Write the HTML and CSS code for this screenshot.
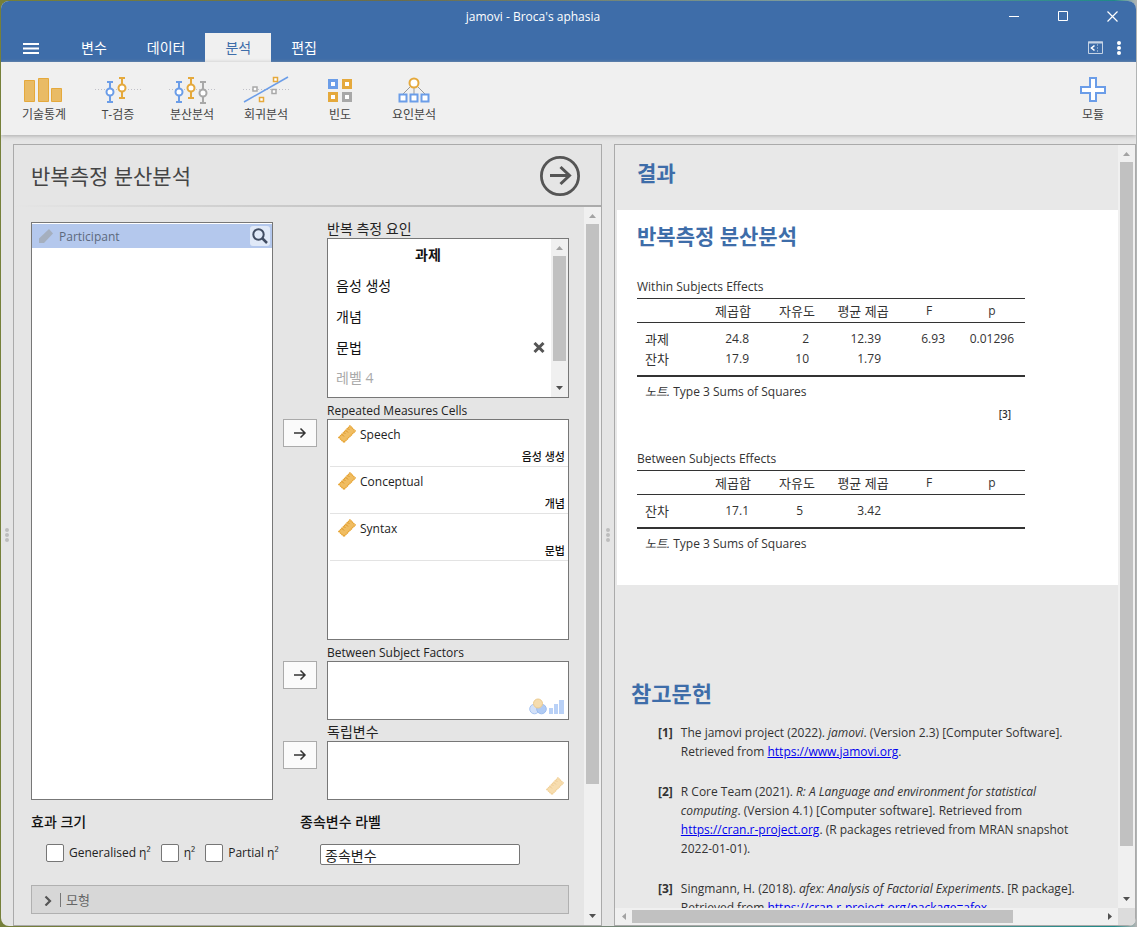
FILE: index.html
```html
<!DOCTYPE html>
<html lang="ko">
<head>
<meta charset="utf-8">
<title>jamovi - Broca's aphasia</title>
<link rel="stylesheet" href="styles.css">
</head>
<body>
<svg class="defs" aria-hidden="true">
  <symbol id="ruler" viewBox="0 0 18 18">
    <path d="M.8 12.500 12 .8 17.300 6 6 17.400Z" fill="#f0bd62" stroke="#e6a22f" stroke-width="1.300" stroke-dasharray="1.400 .5"/>
    <path d="M4 9.500l2 2M6 7.500l1.400 1.400M8 5.500l2 2M10 3.500l1.400 1.400" stroke="#d9952a" stroke-width="1"/>
  </symbol>
  <symbol id="arrow" viewBox="0 0 14 12">
    <path d="M1 6H12M7.500 1.500 12 6 7.500 10.500" fill="none" stroke="#333" stroke-width="1.500"/>
  </symbol>
  <symbol id="up" viewBox="0 0 7 4"><path d="M0 4 3.500 0 7 4Z" fill="#a3a3a3"/></symbol>
  <symbol id="down" viewBox="0 0 7 4"><path d="M0 0H7L3.500 4Z" fill="#505050"/></symbol>
</svg>
<div class="window">
  <header class="titlebar">
    <h1 class="window-title">jamovi - Broca's aphasia</h1>
    <div class="window-controls">
      <button class="window-button" aria-label="최소화"><svg width="11" height="11"><path d="M0 5.500H10" stroke="#fff"/></svg></button>
      <button class="window-button" aria-label="최대화"><svg width="11" height="11"><path d="M.5.5H9.500V9.500H.5Z" fill="none" stroke="#fff"/></svg></button>
      <button class="window-button" aria-label="닫기"><svg width="11" height="11"><path d="M.5.5 10.500 10.500M10.500.5.5 10.500" stroke="#fff" stroke-width="1.2"/></svg></button>
    </div>
  </header>
  <nav class="tabs">
    <button class="menu-button" aria-label="메뉴"><svg width="16" height="11"><path d="M0 1H16M0 5.500H16M0 10H16" stroke="#fff" stroke-width="2"/></svg></button>
    <button class="tab">변수</button>
    <button class="tab">데이터</button>
    <button class="tab tab-active">분석</button>
    <button class="tab">편집</button>
    <div class="tab-tools">
      <button class="plain" aria-label="패널 보기"><svg width="15" height="13" fill="none"><path d="M.5 1H14.500V12.500H.5Z" stroke="#c5d3e5"/><path d="M0 1.500H15" stroke="#c5d3e5" stroke-width="2"/><path d="M6.500 4.500 3.500 7 6.500 9.500" stroke="#fff" stroke-width="1.600"/><path d="M9.500 3V12" stroke="#8ba8cc" stroke-dasharray="2 1"/></svg></button>
      <button class="plain" aria-label="더보기"><svg width="4" height="14" fill="#fff"><circle cx="2" cy="2" r="2"/><circle cx="2" cy="7" r="2"/><circle cx="2" cy="12" r="2"/></svg></button>
    </div>
  </nav>
  <div class="ribbon">
    <button class="ribbon-button">
      <svg width="46" height="30" fill="#e9bb65" stroke="#e5a93c"><path d="M3.500 5.500H13.500V26.500H3.500ZM17.500 3.500H27.500V26.500H17.500ZM30.500 13.500H40.500V26.500H30.500Z"/></svg>
      <span>기술통계</span></button>
    <button class="ribbon-button">
      <svg width="46" height="30" fill="none"><path d="M0 14.500H46" stroke="#c0c0c8" stroke-dasharray="1 2"/><g stroke="#6b9de8" stroke-width="2"><path d="M12 7H18M12 27H18M15 7V27"/><circle cx="15" cy="17" r="3.500" fill="#fff"/></g><g stroke="#e5a93c" stroke-width="2"><path d="M24 3H30M24 23H30M27 3V23"/><circle cx="27" cy="13" r="3.500" fill="#fff"/></g></svg>
      <span>T-검증</span></button>
    <button class="ribbon-button">
      <svg width="46" height="30" fill="none"><path d="M0 14.500H46" stroke="#c0c0c8" stroke-dasharray="1 2"/><g stroke="#6b9de8" stroke-width="2"><path d="M7 7H13M7 27H13M10 7V27"/><circle cx="10" cy="17" r="3.500" fill="#fff"/></g><g stroke="#e5a93c" stroke-width="2"><path d="M19 3H25M19 23H25M22 3V23"/><circle cx="22" cy="13" r="3.500" fill="#fff"/></g><g stroke="#a8a8a8" stroke-width="2"><path d="M31 7H37M31 28H37M34 7V28"/><circle cx="34" cy="18" r="3.500" fill="#fff"/></g></svg>
      <span>분산분석</span></button>
    <button class="ribbon-button">
      <svg width="46" height="30" fill="none"><path d="M0 14.500H46" stroke="#c0c0c8" stroke-dasharray="1 2"/><path d="M1 27 45 2" stroke="#6b9de8" stroke-width="1.500"/><g fill="#fff" stroke-width="1.500"><path d="M10 12H14V16H10ZM29 14.500H33V18.500H29Z" stroke="#a8a8a8"/><path d="M30.500 2.500H34.500V6.500H30.500ZM16.500 22.500H20.500V26.500H16.500Z" stroke="#e5a93c"/></g></svg>
      <span>회귀분석</span></button>
    <button class="ribbon-button">
      <svg width="46" height="30" fill="#fff" stroke-width="3"><path d="M12.500 5.500H19.500V12.500H12.500Z" stroke="#6b9de8"/><path d="M26.500 5.500H33.500V12.500H26.500ZM12.500 18.500H19.500V25.500H12.500Z" stroke="#e5a93c"/><path d="M26.500 18.500H33.500V25.500H26.500Z" stroke="#a8a8a8"/></svg>
      <span>빈도</span></button>
    <button class="ribbon-button">
      <svg width="46" height="30" fill="#fff"><path d="M23 10V20M20 11 11 20M26 11 35 20" stroke="#999"/><circle cx="23" cy="8" r="4.500" stroke="#e5a93c" stroke-width="2"/><path d="M8.500 19.500H15.500V26.500H8.500ZM19.500 19.500H26.500V26.500H19.500ZM30.500 19.500H37.500V26.500H30.500Z" stroke="#6b9de8" stroke-width="2"/></svg>
      <span>요인분석</span></button>
    <button class="ribbon-button ribbon-modules">
      <svg width="46" height="30"><path d="M20 3H26V12H35V18H26V26H20V18H11V12H20Z" fill="#fff" stroke="#6b9de8" stroke-width="2"/></svg>
      <span>모듈</span></button>
  </div>
  <main class="workspace">
    <div class="splitter"><svg width="4" height="16" fill="#bdbdbd"><circle cx="2" cy="3" r="2"/><circle cx="2" cy="8" r="2"/><circle cx="2" cy="13" r="2"/></svg></div>
    <section class="options">
      <div class="options-header">
        <h2 class="options-title">반복측정 분산분석</h2>
        <button class="plain" aria-label="옵션 닫기"><svg class="block" width="40" height="40" fill="none" stroke="#555" stroke-width="2.800"><circle cx="20" cy="20" r="18.600"/><path d="M10 19.500H29M20.500 11 29.500 19.500 20.500 28" stroke-width="3"/></svg></button>
      </div>
      <div class="options-main">
        <div class="options-body">
          <div class="assign">
            <div class="supplier">
              <div class="supplier-row">
                <svg width="16" height="16"><path d="M1 10.500 11 1 15 5.500 6 15H1Z" fill="#a5afbe"/></svg>
                <span class="supplier-name">Participant</span>
                <button class="search" aria-label="검색"><svg class="block" width="16" height="16" fill="none" stroke="#414d63"><circle cx="6.500" cy="6.500" r="5.200" stroke-width="2"/><path d="M10.500 10.500 15 15" stroke-width="2.500"/></svg></button>
              </div>
            </div>
            <div class="target">
              <h3 class="label korean">반복 측정 요인</h3>
              <div class="box factor-box">
                <div class="factor-list">
                  <input class="level factor-name" aria-label="요인 이름" value="과제">
                  <input class="level" aria-label="레벨 1" value="음성 생성">
                  <input class="level" aria-label="레벨 2" value="개념">
                  <div class="level-row"><input class="level" aria-label="레벨 3" value="문법"><button class="plain remove" aria-label="레벨 삭제"><svg class="block" width="12" height="12"><path d="M1.500 1 10.500 10M10.500 1 1.500 10" stroke="#555" stroke-width="3"/></svg></button></div>
                  <input class="level" aria-label="레벨 4" placeholder="레벨 4">
                </div>
                <div class="scrollbar"><svg width="7" height="4"><use href="#up"/></svg><div class="track"><div class="thumb thumb-levels"></div></div><svg width="7" height="4"><use href="#down"/></svg></div>
              </div>
            </div>
            <button class="move" aria-label="셀로 이동"><svg width="14" height="12"><use href="#arrow"/></svg></button>
            <div class="target">
              <h3 class="label">Repeated Measures Cells</h3>
              <div class="box cells-box">
                <div class="cell"><div class="cell-name"><svg width="18" height="18"><use href="#ruler"/></svg><span>Speech</span></div><div class="cell-level">음성 생성</div></div>
                <div class="cell"><div class="cell-name"><svg width="18" height="18"><use href="#ruler"/></svg><span>Conceptual</span></div><div class="cell-level">개념</div></div>
                <div class="cell"><div class="cell-name"><svg width="18" height="18"><use href="#ruler"/></svg><span>Syntax</span></div><div class="cell-level">문법</div></div>
              </div>
            </div>
            <button class="move" aria-label="집단 요인으로 이동"><svg width="14" height="12"><use href="#arrow"/></svg></button>
            <div class="target">
              <h3 class="label">Between Subject Factors</h3>
              <div class="box drop-box">
                <svg width="18" height="17"><circle cx="5.500" cy="11" r="4.800" fill="#d3e1f8" stroke="#a9c5f2"/><circle cx="12.500" cy="11" r="4.800" fill="#b0cbf4" stroke="#9dbdf0"/><circle cx="9" cy="5.500" r="4.500" fill="#f5dcae" stroke="#eccb8f"/></svg>
                <svg width="15" height="17" fill="#b9d1f7"><path d="M0 10H4V16H0ZM5 6H9V16H5ZM10 2H15V16H10Z"/></svg>
              </div>
            </div>
            <button class="move" aria-label="독립변수로 이동"><svg width="14" height="12"><use href="#arrow"/></svg></button>
            <div class="target">
              <h3 class="label korean">독립변수</h3>
              <div class="box drop-box"><svg class="faded" width="18" height="18"><use href="#ruler"/></svg></div>
            </div>
          </div>
          <div class="settings">
            <fieldset class="setting">
              <legend class="setting-title">효과 크기</legend>
              <div class="checks">
                <label class="check"><input type="checkbox">Generalised η²</label>
                <label class="check"><input type="checkbox">η²</label>
                <label class="check"><input type="checkbox">Partial η²</label>
              </div>
            </fieldset>
            <div class="setting">
              <label class="setting-title" for="dv">종속변수 라벨</label>
              <div class="field"><input class="text-input" id="dv" value="종속변수"></div>
            </div>
          </div>
          <button class="collapse"><svg width="8" height="12"><path d="M1.500 2.500 6 7 1.500 11.500" fill="none" stroke="#555" stroke-width="2.200"/></svg><span class="collapse-title">모형</span></button>
        </div>
        <div class="scrollbar"><svg width="7" height="4"><use href="#up"/></svg><div class="track"><div class="thumb thumb-options"></div></div><svg width="7" height="4"><use href="#down"/></svg></div>
      </div>
    </section>
    <div class="splitter"><svg width="4" height="16" fill="#bdbdbd"><circle cx="2" cy="3" r="2"/><circle cx="2" cy="8" r="2"/><circle cx="2" cy="13" r="2"/></svg></div>
    <section class="results">
      <div class="results-body">
        <h2 class="results-title">결과</h2>
        <article class="analysis">
          <h2 class="heading">반복측정 분산분석</h2>
          <table class="stats">
            <caption>Within Subjects Effects</caption>
            <colgroup><col class="c-name"><col class="c-ss"><col class="c-df"><col class="c-ms"><col class="c-f"><col class="c-p"></colgroup>
            <thead><tr><th></th><th>제곱합</th><th>자유도</th><th>평균 제곱</th><th class="latin">F</th><th class="latin">p</th></tr></thead>
            <tbody>
              <tr><th scope="row">과제</th><td>24.8</td><td>2</td><td>12.39</td><td>6.93</td><td>0.01296</td></tr>
              <tr><th scope="row">잔차</th><td>17.9</td><td>10</td><td>1.79</td><td></td><td></td></tr>
            </tbody>
          </table>
          <p class="note"><i>노트.</i> Type 3 Sums of Squares</p>
          <p class="cite">[3]</p>
          <table class="stats">
            <caption>Between Subjects Effects</caption>
            <colgroup><col class="c-name"><col class="c-ss"><col class="c-df"><col class="c-ms"><col class="c-f"><col class="c-p"></colgroup>
            <thead><tr><th></th><th>제곱합</th><th>자유도</th><th>평균 제곱</th><th class="latin">F</th><th class="latin">p</th></tr></thead>
            <tbody>
              <tr><th scope="row">잔차</th><td>17.1</td><td class="narrow">5</td><td>3.42</td><td></td><td></td></tr>
            </tbody>
          </table>
          <p class="note"><i>노트.</i> Type 3 Sums of Squares</p>
        </article>
        <section class="references">
          <h2 class="heading">참고문헌</h2>
          <div class="reference"><b>[1]</b><p>The jamovi project (2022). <i>jamovi</i>. (Version 2.3) [Computer Software].<br>Retrieved from <a href="https://www.jamovi.org">https://www.jamovi.org</a>.</p></div>
          <div class="reference"><b>[2]</b><p>R Core Team (2021). <i>R: A Language and environment for statistical<br>computing</i>. (Version 4.1) [Computer software]. Retrieved from<br><a href="https://cran.r-project.org">https://cran.r-project.org</a>. (R packages retrieved from MRAN snapshot<br>2022-01-01).</p></div>
          <div class="reference"><b>[3]</b><p>Singmann, H. (2018). <i>afex: Analysis of Factorial Experiments</i>. [R package].<br>Retrieved from <a href="https://cran.r-project.org/package=afex">https://cran.r-project.org/package=afex</a>.</p></div>
        </section>
      </div>
      <div class="scrollbar"><svg width="7" height="4"><use href="#up"/></svg><div class="track"><div class="thumb thumb-results"></div></div><svg width="7" height="4"><use href="#down"/></svg></div>
      <div class="scrollbar-x"><svg width="4" height="7"><path d="M4 0V7L0 3.500Z" fill="#a3a3a3"/></svg><div class="track"><div class="thumb thumb-x"></div></div><svg width="4" height="7"><path d="M0 0V7L4 3.500Z" fill="#505050"/></svg></div>
      <div class="corner"></div>
    </section>
  </main>
</div>
</body>
</html>
```

FILE: styles.css
```css
* { box-sizing: border-box; }

body {
  margin: 0;
  height: 100vh;
  padding: 1px;
  overflow: hidden;
  background: linear-gradient(90deg, #76803a, #6b6d4c 35%, #7d9c9c 70%, #1f8a88 98%, #b5b5b5);
  font: 12px/16px "Open Sans", "Noto Sans CJK KR", sans-serif;
  color: #222;
}

h1, h2, h3, p { margin: 0; font-weight: 400; }
button, input { font: inherit; color: inherit; }
button { padding: 0; border: 0; background: none; }
.defs { position: absolute; width: 0; height: 0; }
.block { display: block; }
.plain { display: grid; place-items: center; }

.window {
  display: flex;
  flex-direction: column;
  height: 100%;
  overflow: hidden;
  border-radius: 8px;
  background: #e5e5e5;
}

/* Title bar and tabs */
.titlebar { display: flex; height: 32px; padding-left: 76px; background: #3e6da9; color: #fff; }
.window-title { flex: 1; text-align: center; font-size: 12px; line-height: 32px; }
.window-controls { display: flex; }
.window-button { display: grid; place-items: center; width: 49px; padding: 0 0 2px 2px; }
.tabs { display: flex; height: 29px; background: #3e6da9; color: #fff; font-size: 14px; }
.menu-button { display: grid; place-items: center; width: 60px; padding-top: 2px; }
.tab { padding: 0 20px; line-height: 28px; }
.tab-active { background: #f0f0f0; color: #3e6da9; }
.tab-tools { display: flex; gap: 14px; margin-left: auto; padding-right: 15px; }

/* Ribbon */
.ribbon {
  z-index: 1;
  display: flex;
  height: 73px;
  padding: 13px 6px 0;
  background: #f0f0f0;
  box-shadow: 0 1px 4px #aaa;
}
.ribbon-button { display: flex; flex-direction: column; align-items: center; width: 74px; color: #444; }
.ribbon-button span { line-height: 20px; }
.ribbon-modules { margin-left: auto; }

/* Workspace */
.workspace {
  display: grid;
  grid-template: minmax(0, 1fr) / 12px 589fr 12px 522fr;
  flex: 1;
  min-height: 0;
  padding-top: 9px;
}
.splitter { display: grid; place-items: center; }

.scrollbar { display: flex; flex-direction: column; align-items: center; width: 17px; padding: 7px 0 7px; background: #f0f0f0; }
.scrollbar svg, .scrollbar-x svg { flex: none; }
.scrollbar .track { flex: 1; width: 13px; margin: 6px 0 7px; }
.thumb { background: #c1c1c1; }
.thumb-levels { height: 85%; }
.thumb-options { height: 82%; }
.thumb-results { height: 94%; }
.thumb-x { width: 81%; height: 100%; }

/* Options panel */
.options { display: flex; flex-direction: column; min-width: 0; border: 1px solid #aaa; }
.options-header {
  display: flex;
  align-items: center;
  justify-content: space-between;
  height: 62px;
  padding: 2px 21px 0 17px;
  border-bottom: 2px solid;
  border-image: linear-gradient(90deg, #e5e5e5, #aaa) 1;
}
.options-title { font-size: 21px; line-height: 28px; color: #444; }
.options-main { display: flex; flex: 1; min-height: 0; }
.options-body { flex: 1; padding: 15px 15px 0 17px; overflow: hidden; }
.assign {
  display: grid;
  grid-template-columns: 1fr 34px 1fr;
  gap: 5px 10px;
}
.supplier { grid-row: 1 / 5; padding-top: 1px; border: 1px solid #777; background: #fff; }
.supplier-row { display: flex; align-items: center; gap: 5px; height: 24px; padding: 0 2px 0 6px; background: #b4c8ed; color: #5d687c; }
.supplier-name { padding-top: 2px; }
.search { display: grid; place-items: center; width: 20px; height: 20px; margin-left: auto; border-radius: 3px; background: #e0e9f8; }
.target { grid-column: 3; }
.label { height: 16px; font-size: 12px; line-height: 16px; }
.korean { font-size: 14px; line-height: 14px; }
.box { border: 1px solid #777; background: #fff; }
.move { grid-column: 2; height: 28px; margin-top: 16px; padding-bottom: 2px; border: 1px solid #aaa; background: #fafafa; }
.move svg { vertical-align: middle; }

.factor-box { display: flex; height: 160px; }
.factor-list { flex: 1; min-width: 0; }
.level { display: block; width: 100%; height: 31px; padding: 0 8px 2px; border: 0; outline: 0; background: none; font-size: 14px; color: #111; }
.level::placeholder { color: #aaa; opacity: 1; }
.factor-name { padding-right: 31px; text-align: center; font-weight: 600; }
.level-row { display: flex; align-items: center; padding-right: 6px; }
.remove { width: 12px; height: 12px; }

.cells-box { height: 221px; }
.cell { height: 47px; margin-left: 2px; border-bottom: 1px solid #e3e3e3; }
.cell-name { display: flex; align-items: center; gap: 4px; height: 28px; padding-left: 8px; }
.cell-name span { padding-top: 2px; }
.cell-level { padding-right: 3px; text-align: right; font-size: 11px; font-weight: 500; line-height: 18px; color: #111; }
.drop-box { display: flex; align-items: flex-end; justify-content: flex-end; gap: 2px; height: 59px; padding: 3px 4px 4px; }
.faded { opacity: .5; }

.settings { display: grid; grid-template-columns: 1fr 1fr; padding-top: 12px; }
.setting { min-width: 0; margin: 0; padding: 0; border: 0; }
.setting-title { display: block; padding: 0; font-size: 14px; font-weight: 500; line-height: 20px; color: #111; }
.checks { display: flex; gap: 10px; padding: 12px 0 0 15px; white-space: nowrap; }
.check { display: flex; align-items: center; gap: 5px; line-height: 18px; }
.check input { appearance: none; width: 18px; height: 18px; margin: 0; border: 1px solid #767676; border-radius: 2px; background: #fff; }
.field { padding: 12px 49px 0 20px; }
.text-input { display: block; width: 100%; height: 21px; padding: 1px 4px 0; border: 1px solid #767676; border-radius: 2px; background: #fff; font-size: 14px; line-height: 18px; }
.collapse { display: flex; align-items: center; gap: 8px; width: 100%; height: 29px; margin-top: 20px; padding-left: 12px; border: 1px solid #b0b0b0; background: #d7d7d7; color: #666; font-size: 13px; }
.collapse-title { padding-left: 5px; border-left: 1px solid #777; line-height: 14px; }

/* Results panel */
.results {
  display: grid;
  grid-template: minmax(0, 1fr) 17px / minmax(0, 1fr) 17px;
  min-width: 0;
  border: 1px solid #aaa;
  background: #e8e8e8;
  color: #333;
}
.results-body { padding-left: 2px; overflow: hidden; }
.results-title, .heading { font-size: 21px; font-weight: 700; line-height: 28px; color: #3e6da9; }
.results-title { padding: 14px 20px 23px; }
.analysis { height: 375px; padding: 12px 20px 0; background: #fff; }
.stats { width: 388px; margin-top: 28px; border-collapse: collapse; table-layout: fixed; border-bottom: 2px solid #333; }
.stats caption { padding-bottom: 3px; text-align: left; line-height: 17px; }
.stats th { padding: 0; font-size: 13px; font-weight: 400; }
.stats th.latin { font-size: 12px; }
.stats thead tr { height: 24px; border: 1px solid #333; border-width: 1px 0; }
.stats tbody th { padding-left: 8px; text-align: left; }
.stats td { height: 20px; padding: 0 18px 0 0; text-align: right; line-height: 20px; }
.stats td:nth-child(5) { padding-right: 14px; }
.stats td:nth-child(6) { padding-right: 11px; }
.stats td.narrow { padding-right: 24px; }
.stats tbody::before, .stats tbody::after { content: ""; display: block; height: 6px; }
.c-name { width: 62px; }
.c-ss { width: 68px; }
.c-df { width: 60px; }
.c-ms { width: 72px; }
.c-f { width: 60px; }
.c-p { width: 66px; }
.note { padding: 6px 0 0 8px; line-height: 18px; }
.cite { width: 388px; padding: 5px 14px 0 0; text-align: right; font-size: 10px; font-weight: 600; line-height: 16px; }
.references { padding: 94px 14px 0; }
.reference { display: flex; gap: 8px; padding-left: 27px; line-height: 19px; white-space: nowrap; }
.reference b { font-weight: 700; }
.references .heading { margin-bottom: 16px; font-size: 22px; }
.reference + .reference { margin-top: 21px; }
.reference a { color: #00e; }
.scrollbar-x { display: flex; align-items: center; padding: 0 6px 0 7px; background: #f0f0f0; }
.scrollbar-x .track { flex: 1; height: 13px; margin: 0 6px; }
.corner { background: #dcdcdc; }
```
